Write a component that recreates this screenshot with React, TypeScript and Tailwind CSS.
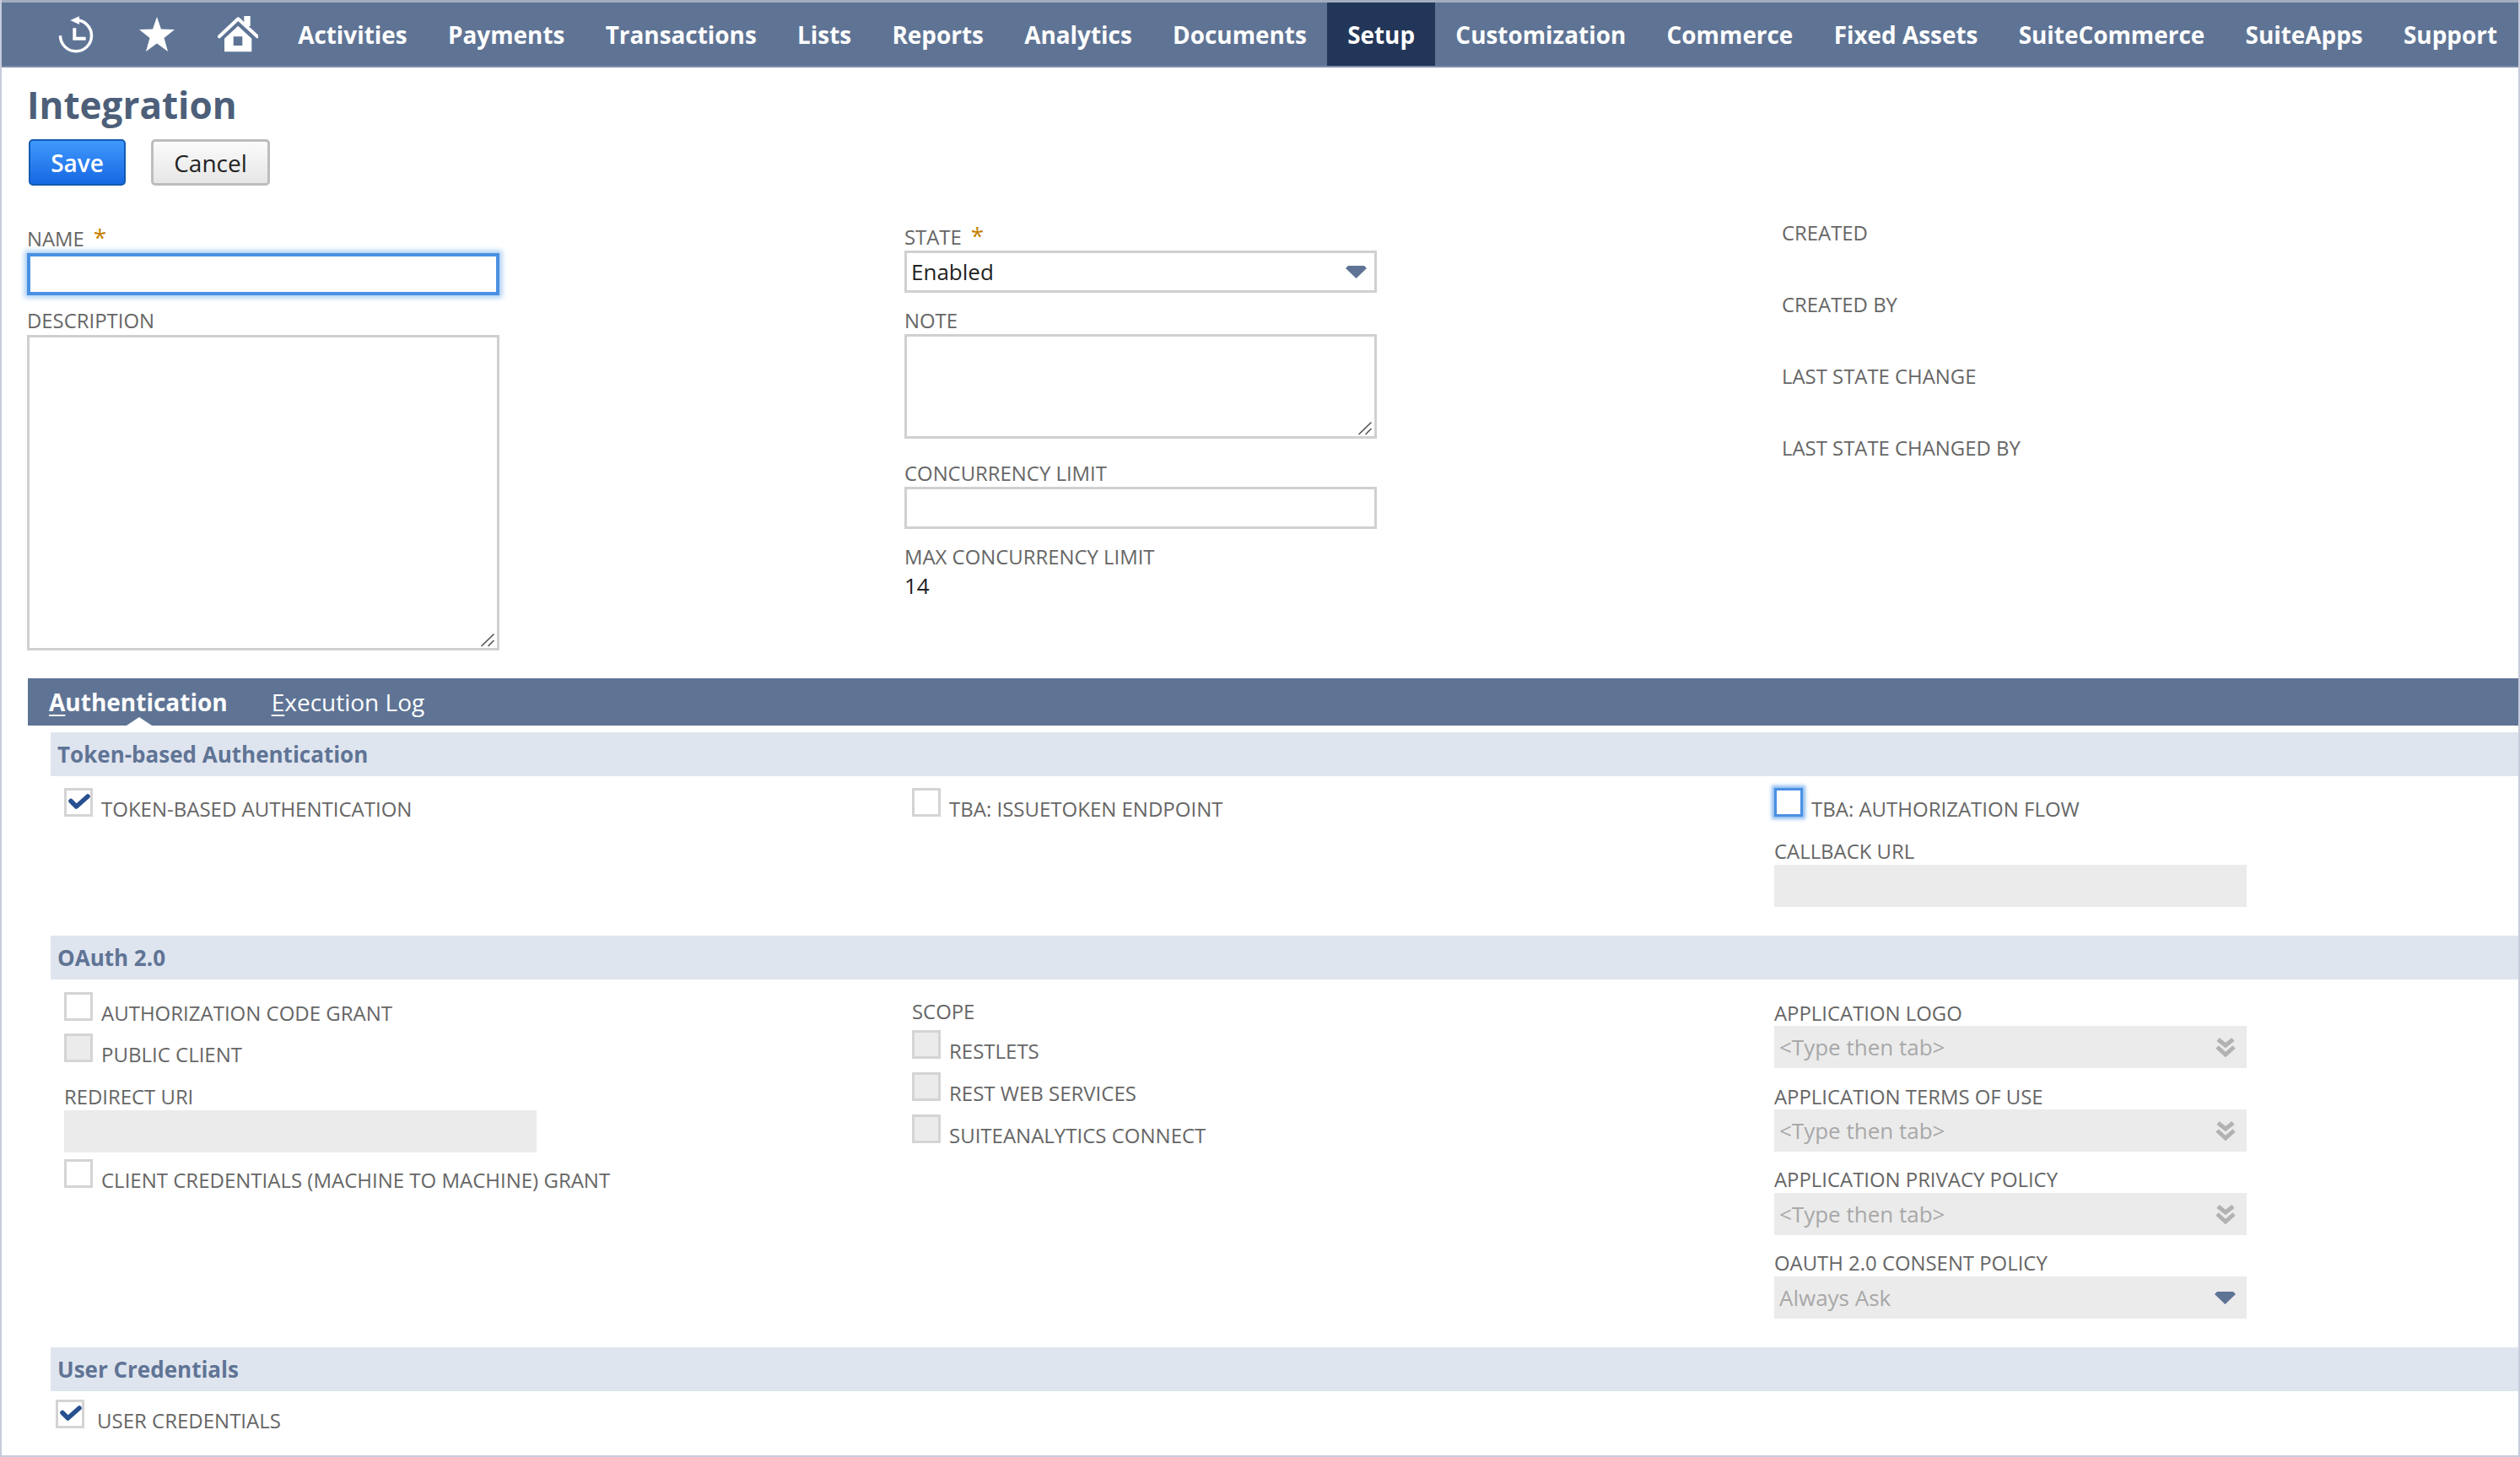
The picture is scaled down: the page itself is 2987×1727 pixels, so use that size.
import type { ReactNode } from 'react'

const NAV_ITEMS = ['Activities', 'Payments', 'Transactions', 'Lists', 'Reports', 'Analytics', 'Documents', 'Setup', 'Customization', 'Commerce', 'Fixed Assets', 'SuiteCommerce', 'SuiteApps', 'Support']

function HistoryIcon() {
  return (
    <svg width="44" height="44" viewBox="0 0 44 44" fill="none" stroke="#fff" className="shrink-0">
      <path d="M21 4.8A18.5 18.5 0 1 1 2.5 23.3" strokeWidth="3.5" />
      <path d="M14.3 5 25 .3V10Z" fill="#fff" stroke="none" />
      <path d="M19.3 14.3V26.7H32.7" strokeWidth="4" />
    </svg>
  )
}

function StarIcon() {
  return (
    <svg width="42" height="41" viewBox="0 0 42 41" fill="#fff">
      <path d="M21 0 26 14.5 42 15 29.5 25 34 41 21 31.5 8 41 12.5 25 0 15 16 14.5Z" />
    </svg>
  )
}

function HomeIcon() {
  return (
    <svg width="48" height="43" viewBox="0 0 48 43">
      <path d="M31.3 0H38.7V12H31.3Z" fill="#fff" />
      <path d="M2 24.3 24.3 3.3 47 24.3" fill="none" stroke="#fff" strokeWidth="4" strokeLinejoin="round" strokeLinecap="round" />
      <path fillRule="evenodd" d="M8 26.7 24.2 11.7 40.3 26.7V42.3H8ZM18.7 24.3V35H29.3V24.3Z" fill="#fff" />
    </svg>
  )
}

function CheckMark() {
  return (
    <svg width="28" height="22" viewBox="0 0 28 22" className="ml-[1px] mt-[2px]">
      <path d="M4 10.5 10.5 17 24 5" fill="none" stroke="#27508f" strokeWidth="5.5" strokeLinecap="round" strokeLinejoin="round" />
    </svg>
  )
}

function SelectArrow() {
  return (
    <svg width="25" height="15" viewBox="0 0 25 15" fill="#5f7495">
      <path d="M0 3 3 0H22L25 3 12.5 15Z" />
    </svg>
  )
}

function DoubleChevron() {
  return (
    <svg width="24" height="24" viewBox="0 0 24 24" fill="none" stroke="#b2b2b2" strokeWidth="5">
      <path d="M3 3 12 10 21 3" />
      <path d="M2 12 12 21 22 12" />
    </svg>
  )
}

function Resizer() {
  return (
    <svg width="18" height="17" viewBox="0 0 18 17" className="absolute right-[2px] bottom-[1px]" stroke="#555" strokeWidth="1.6">
      <path d="M1.5 16 16.5 1.5" />
      <path d="M9.5 16 16.5 9" />
    </svg>
  )
}

function FieldLabel({ children, className = '' }: { children: ReactNode; className?: string }) {
  return <div className={`h-[28px] text-[23.9px] leading-[28px] text-[#666] uppercase ${className}`}>{children}</div>
}

function Required() {
  return <span className="ml-[11px] text-[28px] leading-[20px] text-[#c57f00]">*</span>
}

function CheckRow({ label, checked, disabled, focused, gap = 'gap-[10px]', className = '' }: { label: string; checked?: boolean; disabled?: boolean; focused?: boolean; gap?: string; className?: string }) {
  const box = focused
    ? 'border-[#4a90e2] bg-white shadow-[0_0_4px_3px_#8ebcf0]'
    : disabled
      ? 'border-[#d4d4d4] bg-[#ebebeb]'
      : 'border-[#d4d4d4] bg-white'
  return (
    <div className={`flex h-[34px] ${gap} ${className}`}>
      <div className={`h-[34px] w-[34px] shrink-0 border-[3px] ${box}`}>{checked && <CheckMark />}</div>
      <div className="mt-[11px] h-[28px] text-[24px] leading-[28px] whitespace-nowrap text-[#666] uppercase">{label}</div>
    </div>
  )
}

function GreyField({ text, icon, className = '' }: { text?: string; icon?: ReactNode; className?: string }) {
  return (
    <div className={`flex h-[50px] w-[560px] items-center justify-between bg-[#ebebeb] pr-[13px] pl-[6px] text-[26px] text-[#a8a8a8] ${className}`}>
      <span>{text}</span>
      {icon}
    </div>
  )
}

function SectionBar({ children }: { children: ReactNode }) {
  return <div className="ml-[58px] flex h-[52px] items-center bg-[#dfe5ef] pl-[8px] text-[26px] font-bold text-[#5f7495]">{children}</div>
}

export default function App() {
  return (
    <div className="box-border h-[1727px] w-[2987px] overflow-hidden border-x-2 border-b-2 border-[#c8cbdc] bg-white font-['Open_Sans',sans-serif]">
      <nav className="box-border flex h-[80px] items-center border-t-[3px] border-b-2 border-t-[#a3adc0] border-b-[#7c8ea9] bg-[#5f7495] pl-[67px] text-[27.9px] font-bold text-white">
        <HistoryIcon />
        <div className="ml-[52px] shrink-0"><StarIcon /></div>
        <div className="ml-[51px] shrink-0"><HomeIcon /></div>
        <div className="ml-[23px] flex h-full shrink-0">
          {NAV_ITEMS.map((item) => (
            <div key={item} className={`flex items-center px-[24.15px] pt-[2px] whitespace-nowrap ${item === 'Setup' ? 'bg-[#223659]' : ''}`}>{item}</div>
          ))}
        </div>
      </nav>

      <div className="pl-[30px]">
        <h1 className="mt-[18px] text-[44px] leading-[52px] font-bold text-[#4d5f79]">Integration</h1>
        <div className="mt-[15px] ml-[2px] flex gap-[30px]">
          <button className="h-[55px] w-[115px] rounded-[5px] border-2 border-[#125ab2] bg-gradient-to-b from-[#3f98fc] to-[#1768e2] text-[28px] font-semibold text-white">Save</button>
          <button className="h-[55px] w-[141px] rounded-[5px] border-[3px] border-[#bdbdbd] bg-gradient-to-b from-[#fbfbfb] to-[#e6e6e6] text-[28px] text-[#222]">Cancel</button>
        </div>

        <div className="grid grid-cols-[1040px_1040px_1fr]">
          <div className="mt-[49px]">
            <FieldLabel>Name<Required /></FieldLabel>
            <div className="mt-[3px] h-[50px] w-[560px] border-[4px] border-[#4a90e2] shadow-[0_0_6px_3px_#a9cdf3]" />
            <FieldLabel className="mt-[16px]">Description</FieldLabel>
            <div className="relative mt-[3px] h-[374px] w-[560px] border-[3px] border-[#d0d0d0]"><Resizer /></div>
          </div>
          <div className="mt-[47px]">
            <FieldLabel>State<Required /></FieldLabel>
            <div className="mt-[2px] flex h-[50px] w-[560px] items-center justify-between border-[3px] border-[#d0d0d0] pr-[9px] pl-[5px] text-[26px] text-[#222]">
              <span>Enabled</span>
              <SelectArrow />
            </div>
            <FieldLabel className="mt-[19px]">Note</FieldLabel>
            <div className="relative mt-[2px] h-[124px] w-[560px] border-[3px] border-[#d0d0d0]"><Resizer /></div>
            <FieldLabel className="mt-[27px]">Concurrency Limit</FieldLabel>
            <div className="mt-[2px] h-[50px] w-[560px] border-[3px] border-[#d0d0d0]" />
            <FieldLabel className="mt-[19px]">Max Concurrency Limit</FieldLabel>
            <div className="mt-[4px] text-[26px] leading-[32px] text-[#222]">14</div>
          </div>
          <div className="mt-[42px] flex flex-col gap-[57px]">
            <FieldLabel>Created</FieldLabel>
            <FieldLabel>Created By</FieldLabel>
            <FieldLabel>Last State Change</FieldLabel>
            <FieldLabel>Last State Changed By</FieldLabel>
          </div>
        </div>
      </div>

      <div className="mt-[33px] ml-[31px] flex h-[56px] items-center gap-[52px] bg-[#5f7495] pl-[25px] text-[28px] text-white">
        <div className="relative font-bold">
          <span className="underline decoration-2 underline-offset-4">A</span>uthentication
          <div className="absolute bottom-[-7px] left-[92px] h-0 w-0 border-x-[15px] border-b-[10px] border-x-transparent border-b-white" />
        </div>
        <div><span className="underline decoration-2 underline-offset-4">E</span>xecution Log</div>
      </div>

      <div className="mt-[8px]">
        <SectionBar>Token-based Authentication</SectionBar>
        <div className="ml-[74px] grid h-[189px] grid-cols-[1005px_1022px_1fr]">
          <CheckRow label="Token-based Authentication" checked className="mt-[14px]" />
          <CheckRow label="TBA: IssueToken Endpoint" className="mt-[14px]" />
          <div>
            <CheckRow label="TBA: Authorization Flow" focused className="mt-[14px]" />
            <FieldLabel className="mt-[27px]">Callback URL</FieldLabel>
            <GreyField className="mt-[2px]" />
          </div>
        </div>

        <SectionBar>OAuth 2.0</SectionBar>
        <div className="ml-[74px] grid h-[436px] grid-cols-[1005px_1022px_1fr]">
          <div>
            <CheckRow label="Authorization Code Grant" className="mt-[15px]" />
            <CheckRow label="Public Client" disabled className="mt-[15px]" />
            <FieldLabel className="mt-[27px]">Redirect URI</FieldLabel>
            <GreyField className="mt-[2px]" />
            <CheckRow label="Client Credentials (Machine to Machine) Grant" className="mt-[8px]" />
          </div>
          <div>
            <FieldLabel className="mt-[24px]">Scope</FieldLabel>
            <CheckRow label="RESTlets" disabled className="mt-[8px]" />
            <CheckRow label="REST Web Services" disabled className="mt-[16px]" />
            <CheckRow label="SuiteAnalytics Connect" disabled className="mt-[16px]" />
          </div>
          <div>
            <FieldLabel className="mt-[26px]">Application Logo</FieldLabel>
            <GreyField text="<Type then tab>" icon={<DoubleChevron />} className="mt-[1px]" />
            <FieldLabel className="mt-[20px]">Application Terms of Use</FieldLabel>
            <GreyField text="<Type then tab>" icon={<DoubleChevron />} className="mt-[1px]" />
            <FieldLabel className="mt-[19px]">Application Privacy Policy</FieldLabel>
            <GreyField text="<Type then tab>" icon={<DoubleChevron />} className="mt-[2px]" />
            <FieldLabel className="mt-[19px]">OAuth 2.0 Consent Policy</FieldLabel>
            <GreyField text="Always Ask" icon={<SelectArrow />} className="mt-[2px]" />
          </div>
        </div>

        <SectionBar>User Credentials</SectionBar>
        <CheckRow label="User Credentials" checked gap="gap-[15px]" className="mt-[10px] ml-[64px]" />
      </div>
    </div>
  )
}
